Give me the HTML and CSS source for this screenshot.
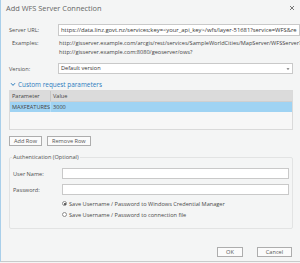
FILE: index.html
```html
<!DOCTYPE html>
<html lang="en">
<head>
    <meta charset="UTF-8">
    <title>Add WFS Server Connection</title>
    <link rel="stylesheet" href="styles.css">
</head>
<body>
    <div class="dialog">
        <div class="titlebar">
            <span class="title">Add WFS Server Connection</span>
            <svg class="close" width="6" height="6" viewBox="0 0 6 6">
                <path d="M1 1L5 5M5 1L1 5" stroke="#6b6b6b" stroke-width="0.9"/>
            </svg>
        </div>

        <div class="row url-row">
            <label class="label">Server URL:</label>
            <div class="field url-field">https://data.linz.govt.nz/services;key=&lt;your_api_key&gt;/wfs/layer-51681?service=WFS&amp;re</div>
        </div>

        <div class="row examples">
            <span class="label label-indent">Examples:</span>
            <div class="example-text">
                <div>http://gisserver.example.com/arcgis/rest/services/SampleWorldCities/MapServer/WFSServer?</div>
                <div>http://gisserver.example.com:8080/geoserver/ows?</div>
            </div>
        </div>

        <div class="row version-row">
            <label class="label">Version:</label>
            <div class="field select">
                <span>Default version</span>
                <svg width="4" height="4" viewBox="0 0 4 4"><path d="M0.5 1.2H3.5L2 3Z" fill="#707070"/></svg>
            </div>
        </div>

        <div class="section-head">
            <svg width="6" height="5" viewBox="0 0 6 5"><path d="M1 1.2L3 3.4L5 1.2" fill="none" stroke="#2b7bbd" stroke-width="1"/></svg>
            <span>Custom request parameters</span>
        </div>

        <div class="grid">
            <div class="grid-row grid-head">
                <div class="cell col-param">Parameter</div>
                <div class="cell">Value</div>
            </div>
            <div class="grid-row selected">
                <div class="cell col-param">MAXFEATURES</div>
                <div class="cell">3000</div>
            </div>
        </div>

        <div class="buttons-left">
            <button class="btn">Add Row</button>
            <button class="btn">Remove Row</button>
        </div>

        <fieldset class="auth">
            <legend>Authentication (Optional)</legend>
            <div class="row auth-row">
                <label class="label auth-label">User Name:</label>
                <div class="field auth-field"></div>
            </div>
            <div class="row auth-row pass-row">
                <label class="label auth-label">Password:</label>
                <div class="field auth-field"></div>
            </div>
            <div class="radios">
                <div class="radio-line"><span class="radio checked"></span>Save Username / Password to Windows Credential Manager</div>
                <div class="radio-line"><span class="radio"></span>Save Username / Password to connection file</div>
            </div>
        </fieldset>

        <div class="footer">
            <button class="btn btn-ok">OK</button>
            <button class="btn btn-cancel">Cancel</button>
        </div>
    </div>
</body>
</html>
```

FILE: styles.css
```css
body {
    margin: 0;
    padding: 0;
    background-color: #f4f5f5;
    font-family: "Open Sans", "Noto Sans", sans-serif;
    overflow: hidden;
}
.dialog {
    width: 299px;
    height: 261px;
    background-color: #f4f5f5;
    border-left: 1px solid #a9cfea;
    border-bottom: 1px solid #c9cbcb;
    color: #555;
    font-size: 5.6px;
    overflow: hidden;
}
.titlebar {
    height: 15px;
    display: flex;
    align-items: center;
    justify-content: space-between;
    padding: 0 5px 0 5px;
}
.title {
    font-size: 7.4px;
    color: #666;
}
.row {
    display: flex;
    align-items: center;
}
.label {
    width: 49px;
    flex-shrink: 0;
    padding-left: 8px;
    color: #4f4f4f;
}
.label-indent {
    padding-left: 11px;
    width: 46px;
    align-self: flex-start;
}
.field {
    background-color: #fff;
    border: 1px solid #c9c9c9;
    box-sizing: border-box;
    height: 11px;
    line-height: 9px;
    padding: 0 2px;
    color: #333;
    white-space: nowrap;
    overflow: hidden;
}
.url-row {
    margin-top: 9px;
}
.url-field {
    width: 242px;
    height: 12px;
    line-height: 10px;
    font-size: 5.85px;
    padding-right: 0;
}
.examples {
    margin-top: 3px;
    line-height: 9px;
}
.example-text {
    padding-left: 1px;
    color: #444;
    white-space: nowrap;
}
.version-row {
    margin-top: 6px;
}
.select {
    width: 235px;
    display: flex;
    align-items: center;
    justify-content: space-between;
}
.section-head {
    margin-top: 5px;
    height: 10px;
    display: flex;
    align-items: center;
    gap: 2px;
    padding-left: 9px;
    color: #2b7bbd;
    font-size: 6.4px;
}
.grid {
    margin: 1px 0 0 8px;
    width: 284px;
    height: 40px;
    box-sizing: border-box;
    background-color: #f7f7f7;
    border: 1px solid #dadada;
}
.grid-row {
    display: flex;
    height: 10px;
    line-height: 10px;
    color: #444;
}
.grid-head {
    background-color: #dbdbdb;
    border-bottom: 1px solid #cfcfcf;
}
.selected {
    background-color: #9fd3f3;
}
.cell {
    padding-left: 2px;
}
.col-param {
    width: 38px;
    border-right: 1px solid #c6c6c6;
}
.selected .col-param {
    border-right-color: #b7dff6;
}
.buttons-left {
    display: flex;
    gap: 5px;
    margin: 6px 0 0 8px;
}
.btn {
    height: 10px;
    padding: 0 4px;
    font-family: inherit;
    font-size: 5.6px;
    line-height: 8px;
    color: #555;
    background-color: #fbfbfb;
    border: 1px solid #adadad;
    border-radius: 0;
}
.auth {
    margin: 6px 0 0 8px;
    width: 284px;
    height: 77px;
    box-sizing: border-box;
    padding: 0;
    border: 1px solid #e2e3e3;
    border-radius: 2px;
}
.auth legend {
    margin-left: 2px;
    padding: 0 1px;
    line-height: 10px;
    color: #4f4f4f;
}
.auth-label {
    width: 49px;
    padding-left: 3px;
}
.auth-field {
    width: 227px;
}
.auth-row {
    margin-top: 6px;
}
.pass-row {
    margin-top: 5px;
}
.radios {
    margin: 3px 0 0 52px;
    color: #4a4a4a;
}
.radio-line {
    display: flex;
    align-items: center;
    gap: 2px;
    height: 11px;
}
.radio {
    width: 5px;
    height: 5px;
    box-sizing: border-box;
    border: 1px solid #8e8e8e;
    border-radius: 50%;
    background-color: #fff;
    position: relative;
}
.radio.checked::after {
    content: "";
    position: absolute;
    left: 0.5px;
    top: 0.5px;
    width: 2px;
    height: 2px;
    border-radius: 50%;
    background-color: #333;
}
.footer {
    display: flex;
    justify-content: flex-end;
    gap: 14px;
    margin-top: 18px;
    padding-right: 8px;
}
.btn-ok {
    width: 26px;
}
.btn-cancel {
    width: 35px;
}
```
